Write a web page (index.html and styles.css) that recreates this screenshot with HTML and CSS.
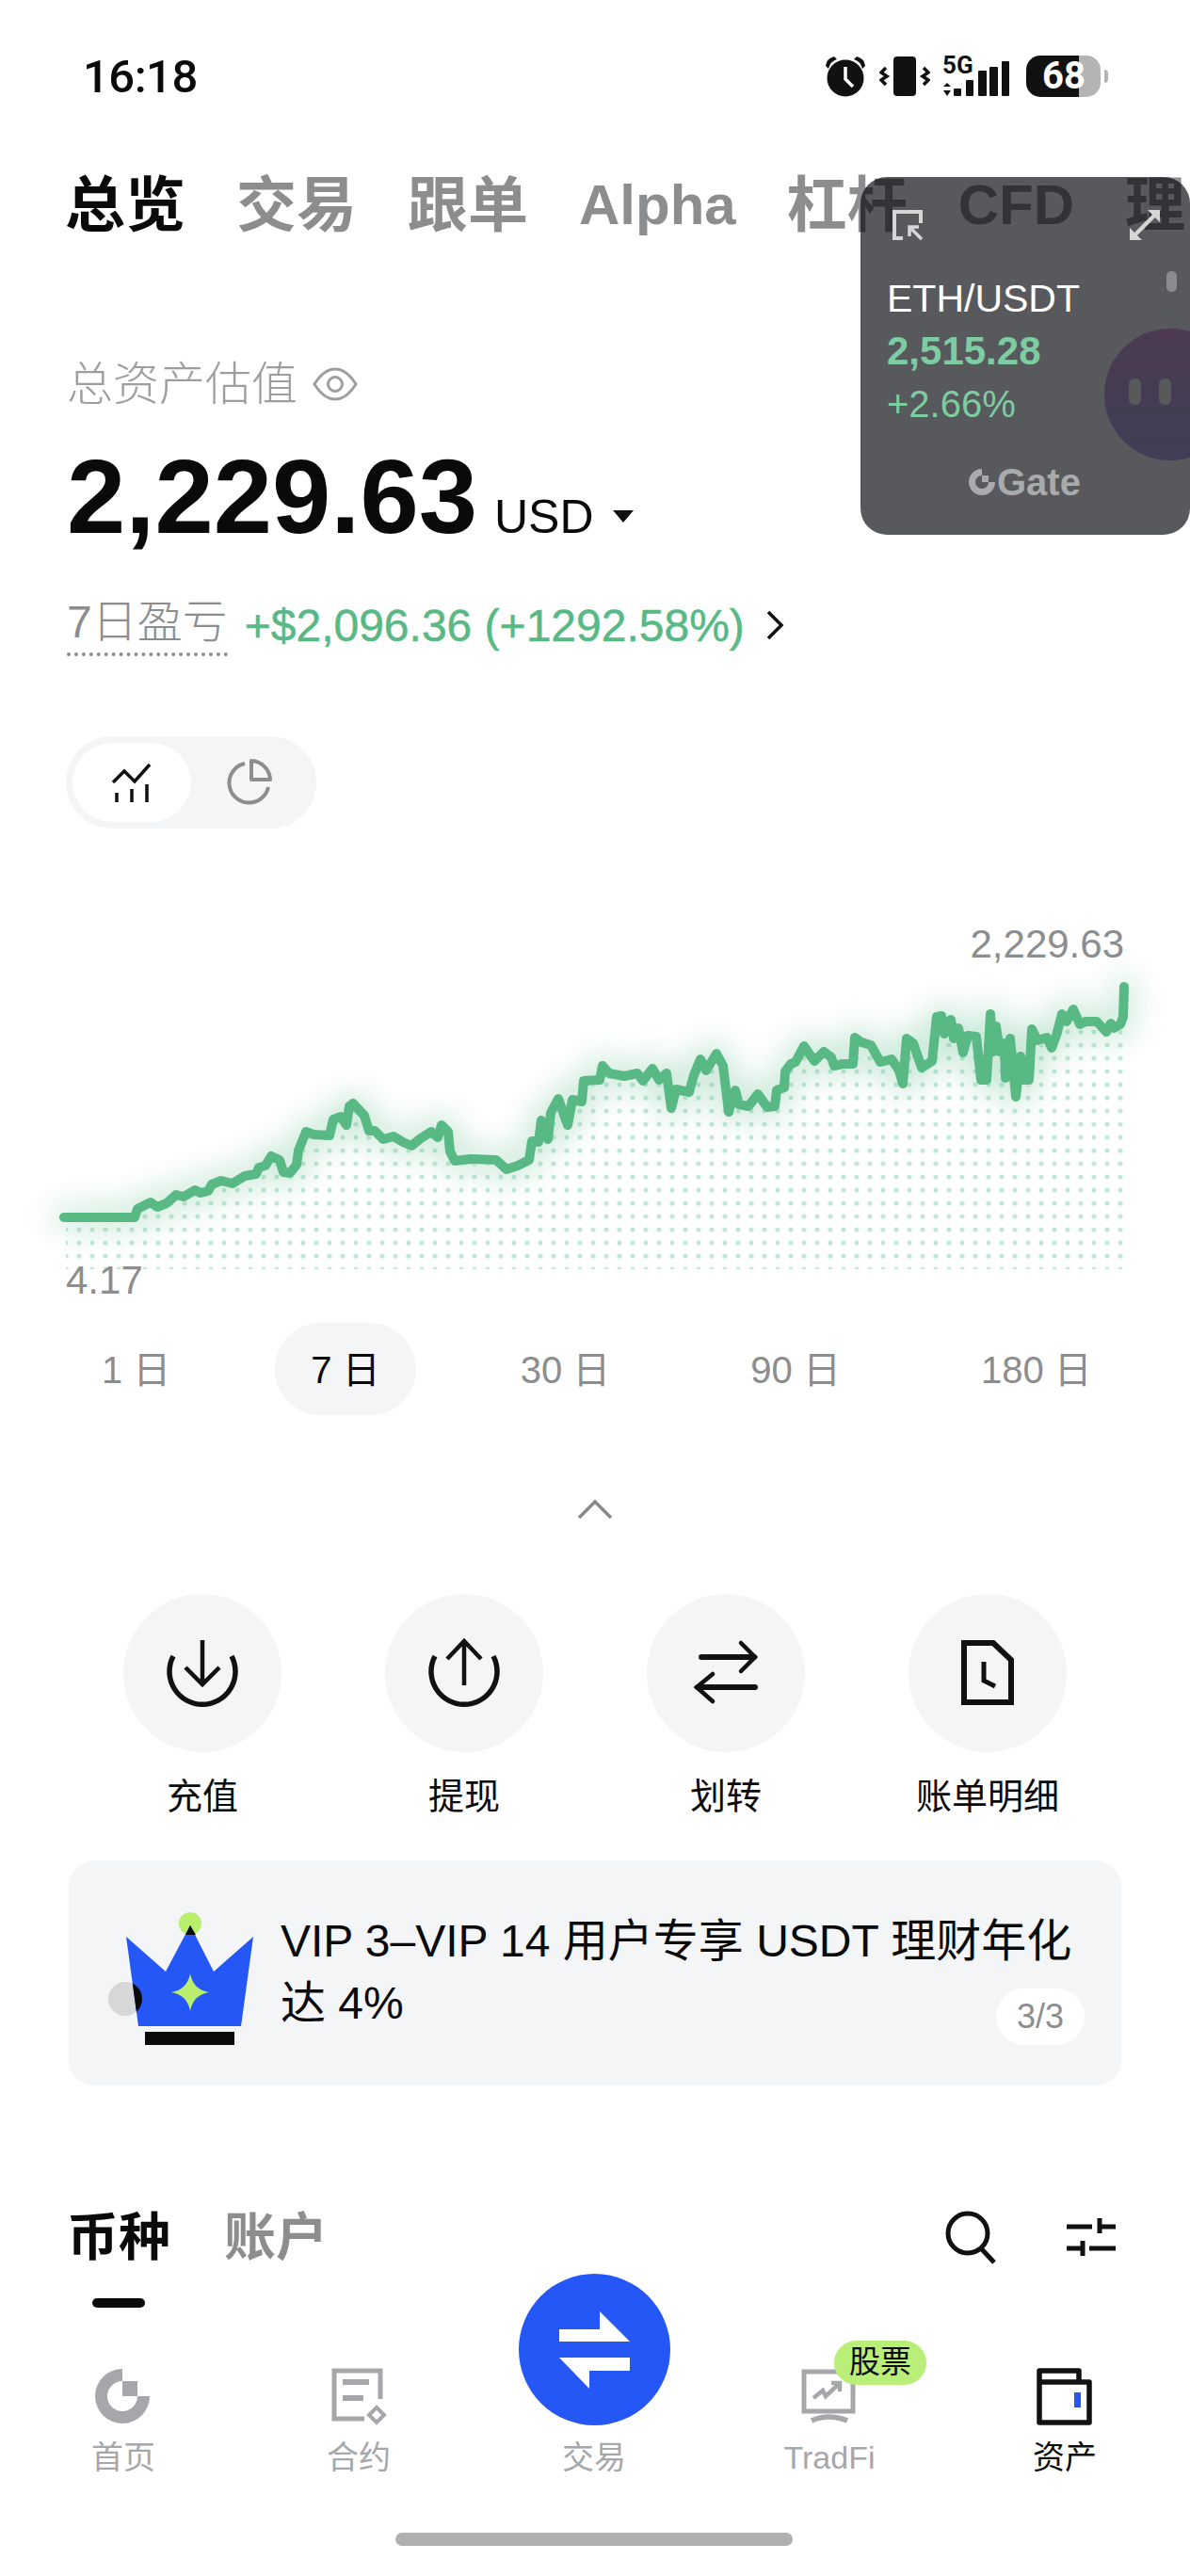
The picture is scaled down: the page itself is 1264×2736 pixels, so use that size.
FILE: index.html

```html
<!DOCTYPE html>
<html lang="zh">
<head>
    <meta charset="UTF-8">
    <meta name="viewport" content="width=device-width, initial-scale=1.0">
    <title>资产总览</title>
    <link rel="stylesheet" href="styles.css">
</head>
<body>
<div class="page">
    <!-- status bar -->
    <div class="status-bar">
        <span class="clock">16:18</span>
        <div class="status-icons">
            <svg class="st-alarm" width="44" height="44" viewBox="0 0 44 44">
                <circle cx="22" cy="24" r="19.5" fill="#111"/>
                <path d="M1 11 Q2 3 10 1 L13 4 Q6 6 4 14Z M43 11 Q42 3 34 1 L31 4 Q38 6 40 14Z" fill="#111"/>
                <path d="M22 12 V25 L30 33" fill="none" stroke="#fff" stroke-width="3.5"/>
            </svg>
            <svg class="st-vibrate" width="54" height="44" viewBox="0 0 54 44">
                <rect x="15" y="1" width="24" height="42" rx="4" fill="#111"/>
                <path d="M7 13 L2 18 L8 22 L2 26 L7 31 M47 13 L52 18 L46 22 L52 26 L47 31" fill="none" stroke="#111" stroke-width="3.5"/>
            </svg>
            <svg class="st-signal" width="72" height="52" viewBox="0 -8 72 52">
                <text x="0" y="19" class="st-5g">5G</text>
                <path d="M5 29 L9 33 H1Z M5 43 L1 37 H9Z" fill="#111"/>
                <rect x="12" y="35" width="8" height="8" rx="1" fill="#111"/>
                <rect x="25" y="26" width="8" height="17" rx="1" fill="#111"/>
                <rect x="38" y="16" width="9" height="27" rx="1" fill="#111"/>
                <rect x="50" y="12" width="9" height="31" rx="1" fill="#111"/>
                <rect x="63" y="6" width="8" height="37" rx="1" fill="#111"/>
            </svg>
            <div class="battery"><span>68</span></div>
            <div class="battery-nub"></div>
        </div>
    </div>

    <!-- top tabs -->
    <div class="top-tabs">
        <span class="top-tab active">总览</span>
        <span class="top-tab">交易</span>
        <span class="top-tab">跟单</span>
        <span class="top-tab latin">Alpha</span>
        <span class="top-tab">杠杆</span>
        <span class="top-tab latin">CFD</span>
        <span class="top-tab">理</span>
    </div>

    <!-- floating ticker -->
    <div class="ticker">
        <svg class="ticker-pip" width="34" height="34" viewBox="0 0 34 34" fill="none" stroke="#d6d6d6" stroke-width="4">
            <path d="M12 31 H3 V3 H31 V15"/>
            <path d="M32 32 L20 20 M19 29 V19 H29" stroke-width="3.5"/>
        </svg>
        <svg class="ticker-expand" width="34" height="34" viewBox="0 0 34 34" fill="#d6d6d6">
            <path d="M33 1 V14 L28 9 L9 28 L14 33 H1 V20 L6 25 L25 6 L20 1Z"/>
        </svg>
        <div class="ticker-nub"></div>
        <div class="ticker-pair">ETH/USDT</div>
        <div class="ticker-price">2,515.28</div>
        <div class="ticker-change">+2.66%</div>
        <div class="ticker-brand">
            <svg width="28" height="28" viewBox="0 0 28 28" fill="#a9aaac">
                <path d="M14 0 A14 14 0 1 0 28 14 H21 A7 7 0 1 1 14 7Z"/>
                <rect x="14" y="7" width="7" height="7"/>
            </svg>
            <span>Gate</span>
        </div>
        <div class="ticker-blob"><i></i><i></i></div>
    </div>

    <!-- balance -->
    <div class="total-label">
        <span>总资产估值</span>
        <svg width="48" height="36" viewBox="0 0 48 36" fill="none" stroke="#9c9ea0" stroke-width="3">
            <path d="M2 18 Q12 2 24 2 Q36 2 46 18 Q36 34 24 34 Q12 34 2 18Z"/>
            <circle cx="24" cy="18" r="7.5"/>
        </svg>
    </div>
    <div class="total-value">
        <span class="amount">2,229.63</span>
        <span class="unit">USD</span>
        <i class="caret"></i>
    </div>
    <div class="pnl">
        <span class="pnl-label">7日盈亏</span>
        <span class="pnl-value">+$2,096.36 (+1292.58%)</span>
        <svg width="20" height="32" viewBox="0 0 20 32" fill="none" stroke="#111" stroke-width="3.5"><path d="M3 2 L17 16 L3 30"/></svg>
    </div>

    <div class="chart-toggle">
        <div class="toggle-item on">
            <svg width="48" height="44" viewBox="0 0 48 44" fill="none" stroke="#111" stroke-width="3.5">
                <path d="M4 22 L16 10 L27 21 L43 3"/>
                <path d="M8 43 V33 M24 43 V29 M40 43 V24"/>
            </svg>
        </div>
        <div class="toggle-item">
            <svg width="52" height="52" viewBox="0 0 52 52" fill="none" stroke="#8b8d8f" stroke-width="4">
                <path d="M20 6 A21 21 0 1 0 45 31"/>
                <path d="M27 3 A21 21 0 0 1 47 23 H27Z" stroke-linejoin="round"/>
            </svg>
        </div>
    </div>

    <!-- chart -->
    <div class="chart">
        <span class="chart-max">2,229.63</span>
        <span class="chart-min">4.17</span>
        <svg width="1264" height="420" viewBox="0 960 1264 420">
            <defs>
                <pattern id="dots" x="63" y="1097" width="14" height="14" patternUnits="userSpaceOnUse">
                    <circle cx="7" cy="7" r="2.6" fill="#c4e8d7"/>
                </pattern>
                <filter id="glow" x="-10%" y="-40%" width="120%" height="180%">
                    <feGaussianBlur stdDeviation="16"/>
                </filter>
                <clipPath id="dots-area">
                    <rect x="70" y="1040" width="1124" height="308"/>
                </clipPath>
                <polyline id="trend" points="68,1293 143,1293 146,1284 160,1277 167,1282 177,1278 187,1269 195,1271 207,1264 213,1267 221,1265 225,1258 235,1254 247,1257 260,1249 272,1247 275,1240 282,1238 288,1228 297,1232 301,1245 308,1246 315,1237 317,1222 325,1202 333,1205 350,1206 354,1189 362,1186 368,1195 371,1175 375,1172 387,1185 392,1201 398,1201 407,1210 418,1207 428,1213 437,1217 447,1209 458,1202 465,1208 469,1195 476,1202 478,1223 483,1233 500,1231 527,1232 538,1242 550,1238 562,1232 565,1212 572,1213 575,1190 582,1210 585,1182 593,1167 603,1195 608,1168 618,1170 620,1148 637,1147 640,1132 647,1140 663,1143 677,1140 683,1148 693,1135 700,1147 708,1140 713,1177 718,1157 732,1160 737,1142 744,1125 750,1137 761,1119 768,1132 774,1181 781,1158 785,1173 795,1175 805,1162 815,1176 823,1175 825,1158 833,1155 834,1138 840,1130 845,1128 854,1111 865,1127 875,1117 883,1123 886,1132 895,1130 906,1130 908,1102 915,1107 925,1110 935,1128 947,1125 955,1137 959,1151 963,1103 970,1108 979,1134 990,1127 995,1080 1000,1079 1003,1098 1010,1083 1013,1103 1018,1092 1023,1118 1028,1100 1037,1101 1042,1147 1048,1147 1052,1077 1055,1117 1058,1090 1062,1117 1067,1108 1068,1145 1073,1103 1079,1165 1084,1122 1088,1147 1093,1147 1096,1093 1102,1105 1112,1102 1117,1113 1122,1100 1128,1077 1133,1085 1140,1072 1147,1088 1153,1085 1165,1085 1175,1096 1180,1087 1183,1092 1190,1088 1193,1080 1194,1048"/>
            </defs>
            <g clip-path="url(#dots-area)">
                <polygon fill="url(#dots)" transform="translate(0 6)" points="68,1293 143,1293 146,1284 160,1277 167,1282 177,1278 187,1269 195,1271 207,1264 213,1267 221,1265 225,1258 235,1254 247,1257 260,1249 272,1247 275,1240 282,1238 288,1228 297,1232 301,1245 308,1246 315,1237 317,1222 325,1202 333,1205 350,1206 354,1189 362,1186 368,1195 371,1175 375,1172 387,1185 392,1201 398,1201 407,1210 418,1207 428,1213 437,1217 447,1209 458,1202 465,1208 469,1195 476,1202 478,1223 483,1233 500,1231 527,1232 538,1242 550,1238 562,1232 565,1212 572,1213 575,1190 582,1210 585,1182 593,1167 603,1195 608,1168 618,1170 620,1148 637,1147 640,1132 647,1140 663,1143 677,1140 683,1148 693,1135 700,1147 708,1140 713,1177 718,1157 732,1160 737,1142 744,1125 750,1137 761,1119 768,1132 774,1181 781,1158 785,1173 795,1175 805,1162 815,1176 823,1175 825,1158 833,1155 834,1138 840,1130 845,1128 854,1111 865,1127 875,1117 883,1123 886,1132 895,1130 906,1130 908,1102 915,1107 925,1110 935,1128 947,1125 955,1137 959,1151 963,1103 970,1108 979,1134 990,1127 995,1080 1000,1079 1003,1098 1010,1083 1013,1103 1018,1092 1023,1118 1028,1100 1037,1101 1042,1147 1048,1147 1052,1077 1055,1117 1058,1090 1062,1117 1067,1108 1068,1145 1073,1103 1079,1165 1084,1122 1088,1147 1093,1147 1096,1093 1102,1105 1112,1102 1117,1113 1122,1100 1128,1077 1133,1085 1140,1072 1147,1088 1153,1085 1165,1085 1175,1096 1180,1087 1183,1092 1190,1088 1193,1080 1194,1048 1194,1345 68,1345"/>
            </g>
            <use href="#trend" class="trend-glow" filter="url(#glow)"/>
            <use href="#trend" class="trend"/>
        </svg>
    </div>

    <div class="periods">
        <span class="period">1 日</span>
        <span class="period on">7 日</span>
        <span class="period">30 日</span>
        <span class="period">90 日</span>
        <span class="period">180 日</span>
    </div>

    <div class="collapse">
        <svg width="36" height="22" viewBox="0 0 36 22" fill="none" stroke="#87898b" stroke-width="3.5"><path d="M1 20 L18 3 L35 20"/></svg>
    </div>

    <!-- actions -->
    <div class="actions">
        <div class="action">
            <div class="action-icon">
                <svg width="80" height="80" viewBox="0 0 80 80" fill="none" stroke="#111" stroke-width="4.5">
                    <path d="M9 22 A35 35 0 1 0 71 22" stroke-width="5.5"/>
                    <path d="M40 5 V52 M22 34 L40 52 L58 34"/>
                </svg>
            </div>
            <span>充值</span>
        </div>
        <div class="action">
            <div class="action-icon">
                <svg width="80" height="80" viewBox="0 0 80 80" fill="none" stroke="#111" stroke-width="4.5">
                    <path d="M9 22 A35 35 0 1 0 71 22" stroke-width="5.5"/>
                    <path d="M40 53 V6 M22 25 L40 6 L58 25"/>
                </svg>
            </div>
            <span>提现</span>
        </div>
        <div class="action">
            <div class="action-icon">
                <svg width="80" height="80" viewBox="0 0 80 80" fill="none" stroke="#111" stroke-width="4.5">
                    <path d="M14 23 H70" stroke-width="6" stroke-linecap="round"/>
                    <path d="M56 8 L71 23 L56 38" stroke-linecap="round"/>
                    <path d="M71 55 H10" stroke-width="6" stroke-linecap="round"/>
                    <path d="M26 41 L9 55 L26 70" stroke-linecap="round"/>
                </svg>
            </div>
            <span>划转</span>
        </div>
        <div class="action">
            <div class="action-icon">
                <svg width="80" height="80" viewBox="0 0 80 80" fill="none" stroke="#111" stroke-width="6">
                    <path d="M15 8 H46 L65 26 V71 H15Z"/>
                    <path d="M36 28 V48 L48 54" stroke-width="5"/>
                </svg>
            </div>
            <span>账单明细</span>
        </div>
    </div>

    <!-- promo -->
    <div class="promo">
        <svg class="crown" width="164" height="150" viewBox="114 2028 164 150">
            <defs>
                <clipPath id="crown-body"><polygon points="134,2057 176,2094 202,2045 227,2094 269,2057 256,2152 147,2152"/></clipPath>
            </defs>
            <circle cx="202" cy="2043" r="12" fill="#b9ef6b"/>
            <circle cx="133" cy="2123" r="18" fill="#d6d7d8"/>
            <polygon points="134,2057 176,2094 202,2045 227,2094 269,2057 256,2152 147,2152" fill="#2557f6"/>
            <circle cx="133" cy="2123" r="18" fill="#0a0a0a" clip-path="url(#crown-body)"/>
            <polygon points="197,2055 202,2045 208,2055" fill="#0a0a0a"/>
            <path d="M202 2096 Q205 2113 222 2116 Q205 2119 202 2136 Q199 2119 182 2116 Q199 2113 202 2096Z" fill="#b9ef6b"/>
            <rect x="154" y="2158" width="95" height="14" fill="#0a0a0a"/>
        </svg>
        <p class="promo-text">
            <span>VIP 3–VIP 14 用户专享 USDT 理财年化</span>
            <span>达 4%</span>
        </p>
        <span class="promo-page">3/3</span>
    </div>

    <!-- list tabs -->
    <div class="list-head">
        <span class="list-tab on">币种</span>
        <span class="list-tab">账户</span>
        <div class="list-tools">
            <svg width="56" height="58" viewBox="0 0 56 58" fill="none" stroke="#111" stroke-width="5">
                <circle cx="25" cy="25" r="21"/>
                <path d="M39 41 L53 56"/>
            </svg>
            <svg width="54" height="42" viewBox="0 0 54 42" fill="none" stroke="#111" stroke-width="5">
                <path d="M1 10 H28 M36 1 V17 M36 10 H53"/>
                <path d="M1 33 H18 M18 25 V41 M25 33 H53"/>
            </svg>
        </div>
    </div>
    <div class="list-mark"></div>

    <!-- bottom nav -->
    <div class="nav">
        <div class="nav-item">
            <svg width="62" height="62" viewBox="0 0 62 62" fill="#a5a7ab">
                <path d="M30 1 A29 29 0 1 0 59 30 H46 A16 16 0 1 1 30 14Z"/>
                <rect x="30" y="14" width="16" height="16"/>
            </svg>
            <span>首页</span>
        </div>
        <div class="nav-item">
            <svg width="62" height="62" viewBox="0 0 62 62" fill="none" stroke="#a5a7ab" stroke-width="5">
                <path d="M54 33 V3 H5 V54 H37"/>
                <path d="M14 15 H42 M14 32 H36" stroke-width="6"/>
                <path d="M50 42 L58 50 L50 58 L42 50Z" stroke-width="4"/>
            </svg>
            <span>合约</span>
        </div>
        <div class="nav-item trade">
            <div class="trade-btn">
                <svg width="76" height="82" viewBox="0 0 76 82" fill="#fff">
                    <path d="M0 19 H43 V0 L75 32 H0Z"/>
                    <path d="M75 49 H32 V82 L0 49 Z M32 63 H75 V49 H32Z"/>
                </svg>
            </div>
            <span>交易</span>
        </div>
        <div class="nav-item">
            <svg width="62" height="62" viewBox="0 0 62 62" fill="none" stroke="#a5a7ab" stroke-width="5">
                <path d="M4 46 V4 H56 V46Z"/>
                <path d="M12 56 Q30 48 50 56" stroke-width="5.5"/>
                <path d="M14 32 L24 24 L27 30 L40 18 M33 16 H42 V25" stroke-width="4.5"/>
            </svg>
            <b class="nav-badge">股票</b>
            <span>TradFi</span>
        </div>
        <div class="nav-item on">
            <svg width="62" height="62" viewBox="0 0 62 62" fill="none" stroke="#111" stroke-width="5.5">
                <path d="M4 14 V3 H46 V15 M4 15 H57 V58 H4Z" stroke-linejoin="round"/>
                <rect x="41" y="26" width="7" height="16" fill="#2557f6" stroke="none"/>
            </svg>
            <span>资产</span>
        </div>
        <div class="home-bar"></div>
    </div>
</div>
</body>
</html>
```

FILE: styles.css

```css
:root {
    --ink: #0a0a0a;
    --muted: #8b8d8f;
    --nav-gray: #a5a7ab;
    --green: #58b985;
    --blue: #2557f6;
    --soft: #f4f5f6;
}

* {
    box-sizing: border-box;
}

body {
    margin: 0;
    background: #fff;
    color: var(--ink);
    font-family: "Liberation Sans", "Noto Sans CJK SC", sans-serif;
}

.page {
    position: relative;
    width: 1264px;
    height: 2736px;
    overflow: hidden;
    background: #fff;
}

/* status bar */
.status-bar {
    height: 162px;
    padding: 0 87px 0 88px;
    display: flex;
    justify-content: space-between;
    align-items: center;
}

.clock {
    font-family: Roboto, sans-serif;
    font-size: 49px;
    font-weight: 500;
    letter-spacing: -0.5px;
}

.status-icons {
    display: flex;
    align-items: flex-end;
    height: 44px;
}

.st-alarm { margin-right: 14px; }
.st-vibrate { margin-right: 13px; }
.st-signal { margin-right: 17px; }

.st-5g {
    font-family: Roboto, sans-serif;
    font-size: 26px;
    font-weight: 700;
    fill: #111;
}

.battery {
    width: 79px;
    height: 44px;
    border-radius: 15px;
    background: linear-gradient(90deg, #111 71%, #b4b4b4 71%);
    color: #fff;
    font-family: Roboto, sans-serif;
    font-size: 40px;
    font-weight: 700;
    line-height: 44px;
    padding-left: 17px;
}

.battery-nub {
    width: 4px;
    height: 14px;
    margin: 0 0 15px 4px;
    border-radius: 0 4px 4px 0;
    background: #b4b4b4;
}

/* top tabs */
.top-tabs {
    height: 112px;
    padding-left: 69px;
    display: flex;
    align-items: center;
    gap: 54px;
    white-space: nowrap;
    overflow: hidden;
}

.top-tab {
    font-size: 64px;
    font-weight: 600;
    line-height: 112px;
    color: var(--muted);
}

.top-tab.latin {
    font-size: 60px;
    font-weight: 700;
}

.top-tab.active {
    color: var(--ink);
    font-weight: 700;
}

/* floating ticker */
.ticker {
    position: absolute;
    left: 914px;
    top: 188px;
    width: 350px;
    height: 380px;
    padding: 104px 0 0 28px;
    border-radius: 28px;
    background: rgba(4, 7, 12, 0.67);
    overflow: hidden;
}

.ticker-pip {
    position: absolute;
    left: 33px;
    top: 34px;
}

.ticker-expand {
    position: absolute;
    left: 285px;
    top: 34px;
}

.ticker-nub {
    position: absolute;
    left: 325px;
    top: 100px;
    width: 11px;
    height: 22px;
    border-radius: 5px;
    background: #8a8c90;
}

.ticker-pair {
    color: #fff;
    font-size: 41px;
    line-height: 50px;
}

.ticker-price {
    margin-top: 6px;
    color: #7dcca2;
    font-size: 42px;
    font-weight: 700;
    line-height: 50px;
}

.ticker-change {
    margin-top: 6px;
    color: #7dcca2;
    font-size: 40px;
    line-height: 50px;
}

.ticker-brand {
    position: absolute;
    left: 115px;
    top: 310px;
    display: flex;
    align-items: center;
    gap: 2px;
    color: #a9aaac;
    font-size: 40px;
    font-weight: 700;
    line-height: 28px;
}

.ticker-blob {
    position: absolute;
    left: 259px;
    top: 161px;
    width: 140px;
    height: 140px;
    border-radius: 50%;
    background: linear-gradient(180deg, #4c3a50, #3e3f56);
}

.ticker-blob i {
    position: absolute;
    top: 53px;
    width: 13px;
    height: 28px;
    border-radius: 6px;
    background: #57595b;
}

.ticker-blob i:first-child { left: 26px; }
.ticker-blob i:last-child { left: 58px; }

/* balance */
.total-label {
    margin-top: 104px;
    padding-left: 71px;
    display: flex;
    align-items: center;
    gap: 16px;
    color: #9c9ea0;
    font-size: 49px;
    font-weight: 300;
    line-height: 60px;
}

.total-value {
    margin-top: 30px;
    padding-left: 71px;
    display: flex;
    align-items: baseline;
    height: 120px;
    line-height: 120px;
}

.amount {
    font-size: 112px;
    font-weight: 700;
}

.unit {
    margin-left: 18px;
    font-size: 50px;
}

.caret {
    margin-left: 20px;
    width: 0;
    height: 0;
    border-left: 11px solid transparent;
    border-right: 11px solid transparent;
    border-top: 13px solid #111;
    position: relative;
    top: -11px;
}

.pnl {
    margin-top: 46px;
    padding-left: 71px;
    display: flex;
    align-items: center;
    height: 60px;
}

.pnl-label {
    color: var(--muted);
    font-size: 48px;
    font-weight: 300;
    line-height: 60px;
    height: 66px;
    border-bottom: 4px dotted #8b8d8f;
}

.pnl-value {
    margin-left: 18px;
    color: var(--green);
    font-size: 48px;
    -webkit-text-stroke: 0.5px var(--green);
}

.pnl svg {
    margin-left: 22px;
}

.chart-toggle {
    margin: 88px 0 0 70px;
    width: 266px;
    height: 98px;
    padding: 7px;
    display: flex;
    border-radius: 49px;
    background: var(--soft);
}

.toggle-item {
    width: 126px;
    display: flex;
    align-items: center;
    justify-content: center;
    border-radius: 42px;
}

.toggle-item.on {
    background: #fff;
}

/* chart */
.chart {
    position: relative;
    margin-top: 80px;
    height: 420px;
}

.chart svg {
    display: block;
}

.chart-max,
.chart-min {
    position: absolute;
    color: var(--muted);
    font-size: 42px;
    line-height: 50px;
    z-index: 1;
}

.chart-max {
    right: 70px;
    top: 18px;
}

.chart-min {
    left: 70px;
    top: 375px;
}

.trend,
.trend-glow {
    fill: none;
    stroke: var(--green);
    stroke-linecap: round;
    stroke-linejoin: round;
}

.trend {
    stroke-width: 10;
}

.trend-glow {
    stroke-width: 24;
    opacity: 0.32;
}

.periods {
    margin-top: 25px;
    padding-left: 70px;
    display: flex;
    gap: 73px;
}

.period {
    height: 98px;
    padding: 0 38px;
    min-width: 146px;
    text-align: center;
    border-radius: 49px;
    color: var(--muted);
    font-size: 40px;
    line-height: 100px;
    white-space: nowrap;
}

.period.on {
    background: var(--soft);
    color: var(--ink);
}

.collapse {
    margin-top: 85px;
    height: 30px;
    display: flex;
    justify-content: center;
    align-items: center;
}

/* actions */
.actions {
    margin-top: 75px;
    padding: 0 76px;
    display: grid;
    grid-template-columns: repeat(4, 278px);
}

.action {
    display: flex;
    flex-direction: column;
    align-items: center;
    gap: 22px;
    font-size: 38px;
    line-height: 50px;
}

.action-icon {
    width: 168px;
    height: 168px;
    border-radius: 50%;
    background: var(--soft);
    display: flex;
    align-items: center;
    justify-content: center;
}

/* promo */
.promo {
    position: relative;
    margin: 43px 73px 0;
    height: 239px;
    padding: 53px 0 0 225px;
    border-radius: 28px;
    background: #f4f5f7;
}

.crown {
    position: absolute;
    left: 41px;
    top: 52px;
}

.promo-text {
    margin: 0;
    font-size: 48px;
    line-height: 66px;
}

.promo-text span {
    display: block;
    width: fit-content;
}

.promo-page {
    position: absolute;
    right: 39px;
    top: 136px;
    width: 94px;
    height: 60px;
    border-radius: 30px;
    background: #fff;
    color: var(--muted);
    font-size: 36px;
    line-height: 60px;
    text-align: center;
}

/* list head */
.list-head {
    margin-top: 126px;
    padding: 0 78px 0 71px;
    height: 70px;
    display: flex;
    align-items: center;
    gap: 57px;
}

.list-tab {
    color: var(--muted);
    font-size: 55px;
    font-weight: 700;
    line-height: 70px;
}

.list-tab.on {
    color: var(--ink);
}

.list-tools {
    margin-left: auto;
    display: flex;
    align-items: center;
    gap: 73px;
}

.list-mark {
    margin: 30px 0 0 98px;
    width: 56px;
    height: 10px;
    border-radius: 5px;
    background: var(--ink);
}

/* bottom nav */
.nav {
    position: absolute;
    left: 0;
    right: 0;
    bottom: 0;
    height: 276px;
    padding: 55px 6px 0;
    display: grid;
    grid-template-columns: repeat(5, 250px);
    background: #fff;
}

.nav-item {
    position: relative;
    display: flex;
    flex-direction: column;
    align-items: center;
    height: 128px;
    color: var(--nav-gray);
    font-size: 34px;
    line-height: 50px;
}

.nav-item svg {
    display: block;
}

.nav-item > span:last-child {
    margin-top: 8px;
}

.nav-item.on {
    color: var(--ink);
}

.trade-btn {
    position: absolute;
    left: 45px;
    top: -100px;
    width: 161px;
    height: 161px;
    border-radius: 50%;
    background: var(--blue);
    display: flex;
    align-items: center;
    justify-content: center;
}

.trade > span {
    padding-top: 62px;
}

.nav-badge {
    position: absolute;
    left: 130px;
    top: -29px;
    width: 98px;
    height: 47px;
    border-radius: 24px;
    background: #b9ee78;
    color: var(--ink);
    font-size: 33px;
    font-weight: 400;
    line-height: 46px;
    text-align: center;
}

.home-bar {
    position: absolute;
    left: 420px;
    top: 230px;
    width: 422px;
    height: 14px;
    border-radius: 7px;
    background: #b0b0b0;
}
```
